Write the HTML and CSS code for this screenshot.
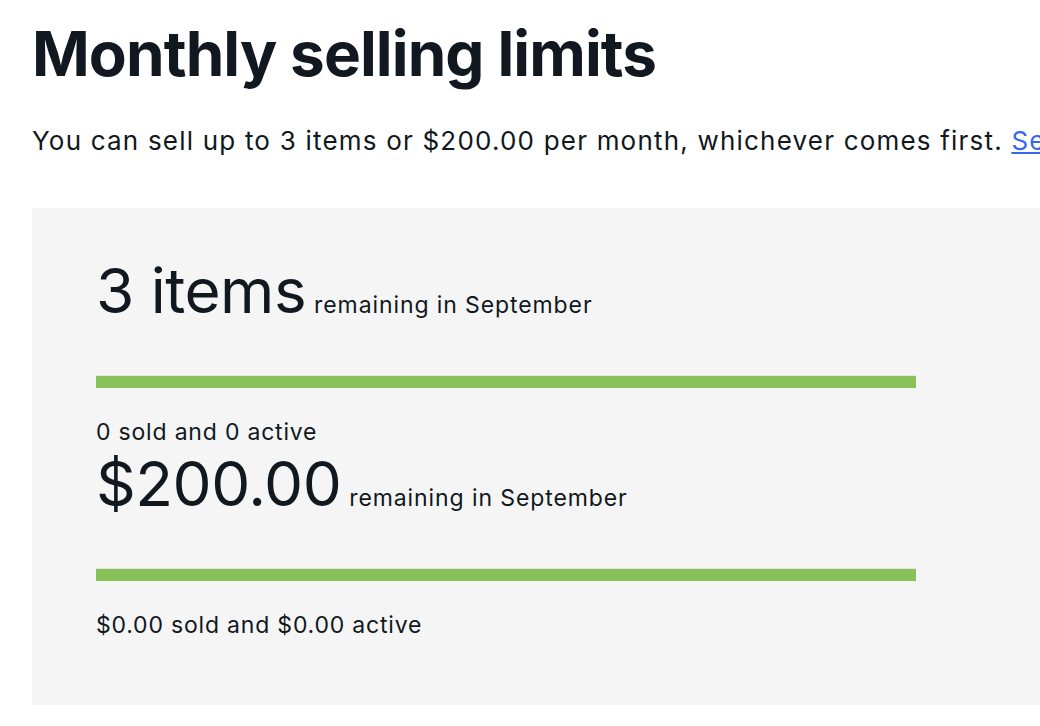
FILE: index.html
```html
<!DOCTYPE html>
<html lang="en">
<head>
<meta charset="utf-8">
<title>Monthly selling limits</title>
<link rel="stylesheet" href="styles.css">
</head>
<body>
<main class="page">
  <h1 class="title">Monthly selling limits</h1>
  <p class="intro">You can sell up to 3 items or $200.00 per month, whichever comes first. <a class="link" href="#">See how selling limits work</a></p>
  <section class="panel">
    <div class="limit">
      <div class="headline"><span class="big">3 items</span> <span class="small">remaining in September</span></div>
      <div class="track"><div class="fill" style="width:100%"></div></div>
      <div class="caption">0 sold and 0 active</div>
    </div>
    <div class="limit limit-next">
      <div class="headline"><span class="big">$200.00</span> <span class="small">remaining in September</span></div>
      <div class="track"><div class="fill" style="width:100%"></div></div>
      <div class="caption">$0.00 sold and $0.00 active</div>
    </div>
  </section>
</main>
</body>
</html>
```

FILE: styles.css
```css
html, body {
  margin: 0;
  padding: 0;
  overflow: hidden;
  background: #ffffff;
}
body {
  font-family: Inter, "Liberation Sans", sans-serif;
  color: #111820;
}
.page {
  padding-left: 32px;
  width: 1400px;
}
.title {
  margin: 17px 0 0;
  font-size: 62px;
  line-height: 74px;
  font-weight: 700;
  letter-spacing: -0.9px;
}
.intro {
  margin: 34px 0 0;
  font-size: 26px;
  line-height: 32px;
  letter-spacing: 1.2px;
  white-space: nowrap;
}
.link {
  color: #3665f3;
  text-decoration: underline;
}
.panel {
  margin-top: 51px;
  background: #f5f5f5;
  width: 1100px;
  padding: 52px 0 66px 64px;
}
.headline {
  display: flex;
  align-items: baseline;
  gap: 8px;
  line-height: 62px;
  height: 64px;
}
.big {
  font-size: 62px;
  font-weight: 400;
  letter-spacing: -0.5px;
}
.small {
  font-size: 23px;
  letter-spacing: 0.9px;
}
.track {
  margin-top: 51px;
  width: 820px;
  border-top: 1px solid #e5e5e5;
}
.fill {
  height: 12px;
  background: #88c157;
}
.caption {
  margin-top: 30px;
  font-size: 23px;
  line-height: 28px;
  letter-spacing: 0.8px;
}
.limit-next {
  margin-top: 7px;
}
```
